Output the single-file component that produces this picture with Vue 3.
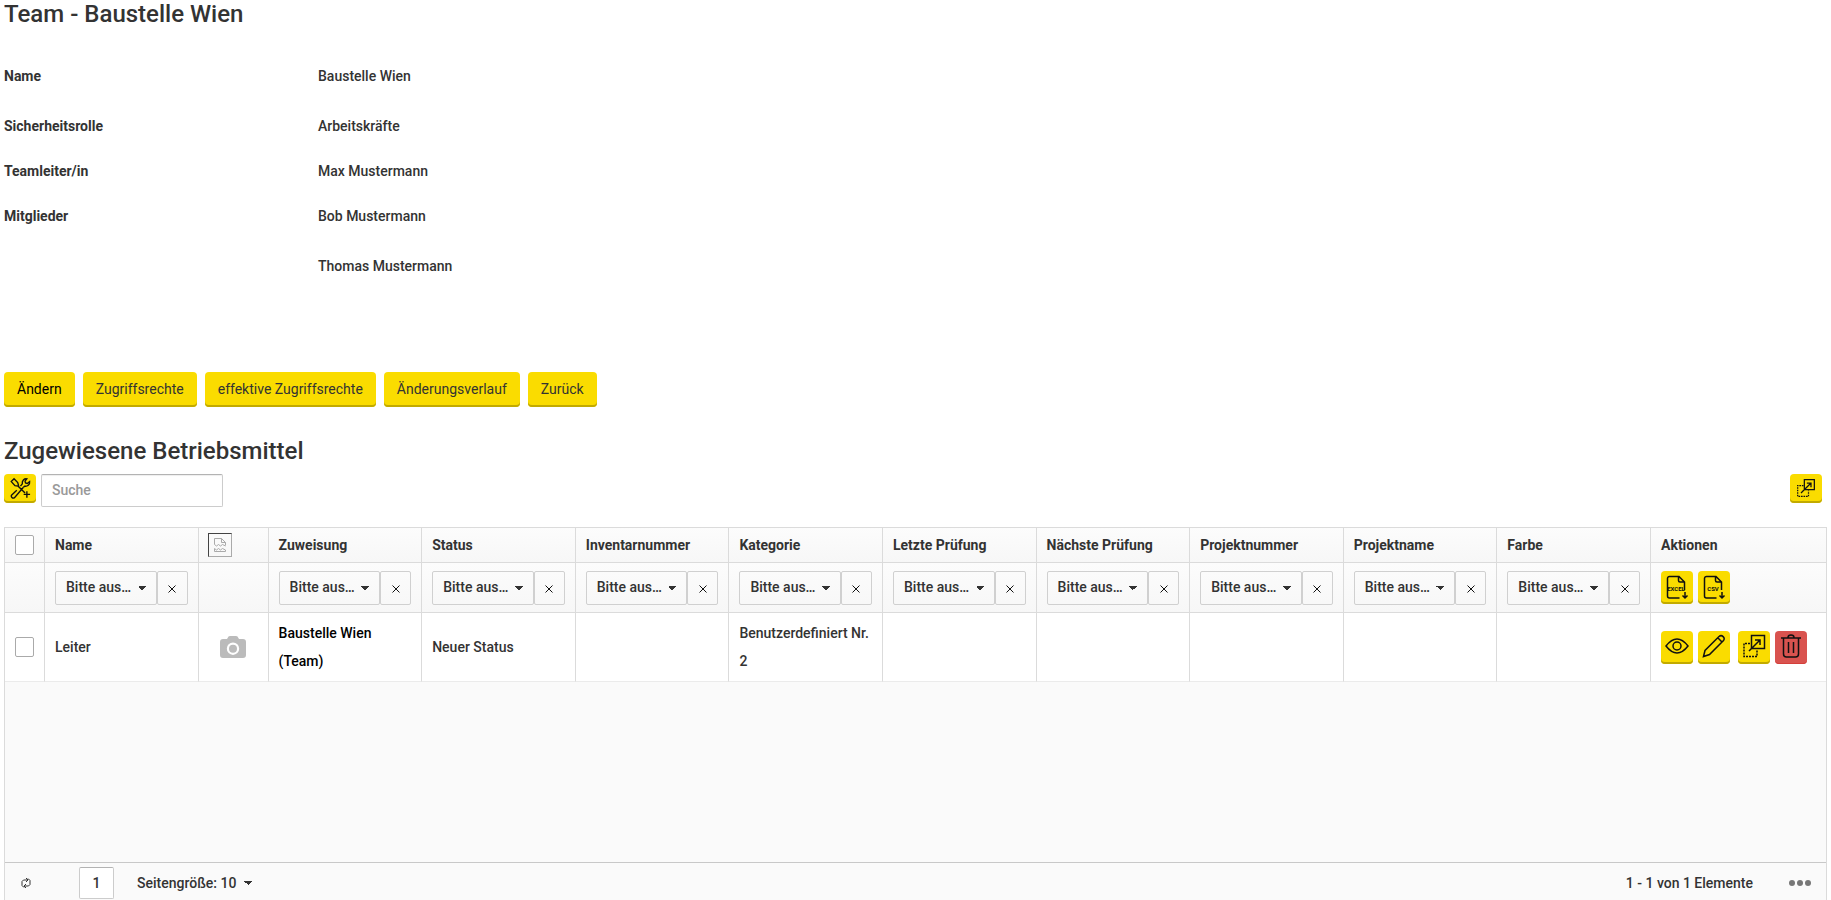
<template>
  <main class="team-page">
    <h2 class="page-title">Team - Baustelle Wien</h2>

    <dl class="details">
      <div v-for="field in fields" :key="field.label" class="detail-row">
        <dt>{{ field.label }}</dt>
        <dd v-for="value in field.values" :key="value">{{ value }}</dd>
      </div>
    </dl>

    <div class="page-actions">
      <button
        v-for="(action, index) in pageActions"
        :key="action"
        type="button"
        class="btn"
        :class="{ 'btn-primary': index === 0 }"
      >{{ action }}</button>
    </div>

    <h2 class="section-title">Zugewiesene Betriebsmittel</h2>

    <div class="toolbar">
      <button type="button" class="icon-btn" aria-label="Betriebsmittel zuweisen">
        <svg width="22" height="22" viewBox="0 0 24 24">
          <path d="M10.500 9.500 9.500 6 5.500 2 2.500 5 6.500 9.500 10 10 17.500 17.500M8.500 14.500 3 19.500c-1.500 2 1 4.500 3 3L15.500 11.500" />
          <path d="M12.500 10 14.500 7.500C14 4 16.500 1.500 19.500 2L17.500 4.500 18 6.500 20 7 22.500 5C23 8.500 20 10.500 17 10L15.500 11.500" />
          <path d="M19.500 15.500v7M16 19h7" />
        </svg>
      </button>
      <input v-model="search" class="search" type="text" placeholder="Suche" aria-label="Suche">
      <button type="button" class="icon-btn export-btn" aria-label="Zuweisung ändern">
        <svg width="20" height="20" viewBox="0 0 24 24">
          <path d="M10 2h12v12H10zM6 18 18 6M13 6h5v5" />
          <path class="dotted" d="M9 9H2v13h13v-7" />
        </svg>
      </button>
    </div>

    <section class="grid">
      <table>
        <colgroup>
          <col class="col-check">
          <col>
          <col class="col-image">
          <col v-for="column in columns.slice(1)" :key="column">
          <col class="col-actions">
        </colgroup>
        <thead>
          <tr class="head-row">
            <th><input v-model="allSelected" type="checkbox" aria-label="Alle auswählen"></th>
            <th>{{ columns[0] }}</th>
            <th class="image-head">
              <span class="broken-image">
                <svg width="14" height="16" viewBox="0 0 14 16">
                  <path d="M1.500 7.500V1.500h7l4 4v3M8.500 1.500v4h4M1.500 7.500l2 1.500 2-1.500 2 1.500 2-1.500 3 1.500M1.500 14.500v-3l2 1.500 2-1.500 2 1.500 2-1.500 3 1.500v1.500z" />
                </svg>
              </span>
            </th>
            <th v-for="column in columns.slice(1)" :key="column">{{ column }}</th>
            <th>Aktionen</th>
          </tr>
          <tr class="filter-row">
            <td></td>
            <template v-for="(column, index) in columns" :key="column">
              <td>
                <div class="filter">
                  <select v-model="filters[column]" :aria-label="column">
                    <option value="">Bitte aus…</option>
                  </select>
                  <button type="button" :aria-label="`${column} zurücksetzen`" @click="filters[column] = ''">
                    <svg width="8" height="8" viewBox="0 0 8 8"><path d="M.500 .500l7 7M7.500 .500l-7 7" /></svg>
                  </button>
                </div>
              </td>
              <td v-if="index === 0"></td>
            </template>
            <td>
              <div class="row-actions">
                <button v-for="type in ['EXCEL', 'CSV']" :key="type" type="button" class="icon-btn tall" :aria-label="type">
                  <svg width="24" height="26" viewBox="0 0 24 26">
                    <path d="M14.500 24H4.500a2 2 0 0 1-2-2V4.500a2 2 0 0 1 2-2h9.500l5.500 5.500v8M13.500 2.500v4a1.500 1.500 0 0 0 1.500 1.500h4.500" />
                    <path d="M20 18v6M17.500 21.500l2.500 2.500 2.500-2.500" />
                    <text x="11" y="17">{{ type }}</text>
                  </svg>
                </button>
              </div>
            </td>
          </tr>
        </thead>
        <tbody>
          <tr v-for="item in items" :key="item.name">
            <td><input v-model="item.selected" type="checkbox" :aria-label="item.name"></td>
            <td>{{ item.name }}</td>
            <td class="image-cell">
              <svg class="camera" width="26" height="24" viewBox="0 0 26 24">
                <path fill-rule="evenodd" d="M3 4h4l1.500-2.500Q9 1 10 1h6q1 0 1.500.5L19 4h4a3 3 0 0 1 3 3v13a3 3 0 0 1-3 3H3a3 3 0 0 1-3-3V7a3 3 0 0 1 3-3ZM13 7.500a6.200 6.200 0 1 0 0 12.400 6.200 6.200 0 0 0 0-12.400ZM13 9.700a4 4 0 1 1 0 8 4 4 0 0 1 0-8Z" />
              </svg>
            </td>
            <td class="assignment">{{ item.assignment }}</td>
            <td>{{ item.status }}</td>
            <td></td>
            <td>{{ item.category }}</td>
            <td v-for="n in 5" :key="n"></td>
            <td>
              <div class="row-actions">
                <button type="button" class="icon-btn tall" aria-label="Anzeigen">
                  <svg width="24" height="24" viewBox="0 0 24 24">
                    <path d="M1 12C4.500 7.500 8 5 12 5s7.500 2.500 11 7c-3.500 4.500-7 7-11 7s-7.500-2.500-11-7Z" />
                    <circle cx="12" cy="12" r="4" />
                  </svg>
                </button>
                <button type="button" class="icon-btn tall" aria-label="Bearbeiten">
                  <svg width="24" height="24" viewBox="0 0 24 24">
                    <path d="M1.500 22.500 3 16.500 17 2.500c3-2.500 6.500 1.500 4.500 4L7.500 20.500ZM16 4l4.500 4.500" />
                  </svg>
                </button>
                <button type="button" class="icon-btn tall assign" aria-label="Zuweisen">
                  <svg width="24" height="24" viewBox="0 0 24 24">
                    <path d="M9.500 1.500h13v13h-13zM7 17 18 6M13 6h5v5" />
                    <path class="dotted" d="M8 9.500H2v13h13v-7" />
                  </svg>
                </button>
                <button type="button" class="icon-btn tall danger" aria-label="Löschen">
                  <svg width="24" height="26" viewBox="0 0 24 26">
                    <path d="M2 5h20M9 4.500a3 2.500 0 0 1 6 0M4.500 5v16a3 3 0 0 0 3 3h9a3 3 0 0 0 3-3V5M9.500 9v11M14.500 9v11" />
                  </svg>
                </button>
              </div>
            </td>
          </tr>
        </tbody>
      </table>

      <footer class="pager">
        <button type="button" class="refresh" aria-label="Aktualisieren">
          <svg width="10" height="12" viewBox="0 0 10 12">
            <path d="M3.500 10H2.500L1 8.500v-4L2.500 3h4M5 1l2 2-2 2M6.500 2h1L9 3.500v4L7.500 9h-4M5 7 3 9l2 2" />
          </svg>
        </button>
        <input v-model="page" class="page-input" type="text" aria-label="Seite">
        <select v-model="pageSize" class="page-size" aria-label="Seitengröße">
          <option :value="10">Seitengröße: 10</option>
        </select>
        <span class="pager-info">1 - 1 von 1 Elemente</span>
        <button type="button" class="more" aria-label="Mehr">
          <i></i><i></i><i></i>
        </button>
      </footer>
    </section>
  </main>
</template>

<script setup>
import { ref, reactive, computed } from 'vue';

const fields = [
  { label: 'Name', values: ['Baustelle Wien'] },
  { label: 'Sicherheitsrolle', values: ['Arbeitskräfte'] },
  { label: 'Teamleiter/in', values: ['Max Mustermann'] },
  { label: 'Mitglieder', values: ['Bob Mustermann', 'Thomas Mustermann'] }
];

const pageActions = ['Ändern', 'Zugriffsrechte', 'effektive Zugriffsrechte', 'Änderungsverlauf', 'Zurück'];

const columns = [
  'Name',
  'Zuweisung',
  'Status',
  'Inventarnummer',
  'Kategorie',
  'Letzte Prüfung',
  'Nächste Prüfung',
  'Projektnummer',
  'Projektname',
  'Farbe'
];

const items = reactive([
  {
    name: 'Leiter',
    assignment: 'Baustelle Wien (Team)',
    status: 'Neuer Status',
    category: 'Benutzerdefiniert Nr. 2',
    selected: false
  }
]);

const search = ref('');
const page = ref('1');
const pageSize = ref(10);
const filters = reactive(Object.fromEntries(columns.map(column => [column, ''])));

const allSelected = computed({
  get: () => items.every(item => item.selected),
  set: (value) => items.forEach(item => { item.selected = value; })
});
</script>

<style>
body {
  margin: 0;
  background: #fff;
}
</style>

<style scoped>
* {
  box-sizing: border-box;
}

.team-page {
  display: flex;
  flex-direction: column;
  min-height: 100vh;
  padding: 0 4px;
  font-family: Roboto, "Liberation Sans", sans-serif;
  font-size: 14px;
  font-weight: 500;
  line-height: 20px;
  color: #333;
}

button,
input,
select {
  font: inherit;
  color: inherit;
}

button {
  cursor: pointer;
}

svg {
  display: block;
  fill: none;
  stroke: #111;
  stroke-width: 1.5;
}

.page-title,
.section-title {
  margin: 0;
  font-size: 24px;
  font-weight: 500;
  line-height: 28px;
}

.details {
  margin: 36px 0 0;
}

.detail-row {
  display: grid;
  grid-template-columns: 314px 1fr;
  padding-bottom: 25px;
}

.detail-row:first-child {
  padding: 2px 0 30px;
}

.detail-row:last-child {
  row-gap: 30px;
  padding-bottom: 96px;
}

dt {
  font-weight: 700;
}

dd {
  grid-column: 2;
  margin: 0;
}

.page-actions {
  display: flex;
  gap: 8px;
}

.btn {
  height: 35px;
  padding: 0 13px 2px;
  border: 0;
  border-radius: 4px;
  background: #fadc00;
  box-shadow: inset 0 -2px #c2aa00;
  font-weight: 400;
}

.btn-primary {
  color: #000;
}

.section-title {
  margin: 30px 0 9px;
}

.toolbar {
  display: flex;
  align-items: flex-start;
  gap: 5px;
  padding-right: 5px;
  margin-bottom: 20px;
}

.icon-btn {
  display: flex;
  align-items: center;
  justify-content: center;
  width: 32px;
  height: 29px;
  padding: 0 0 2px;
  border: 0;
  border-radius: 4px;
  background: #fadc00;
  box-shadow: inset 0 -2px #c2aa00;
}

.icon-btn.tall {
  height: 33px;
}

.icon-btn text {
  fill: #111;
  stroke: none;
  font-family: "Liberation Sans Narrow", Roboto, sans-serif;
  font-size: 6px;
  font-weight: 700;
  text-anchor: middle;
}

.dotted {
  stroke-dasharray: 2 1;
}

.search {
  width: 182px;
  height: 33px;
  padding: 0 10px 2px;
  border: 1px solid #ccc;
  border-top-color: #b3b3b3;
  border-radius: 2px;
  background: #fff;
  box-shadow: inset 0 1px 1px #eee;
}

.search::placeholder {
  color: #999;
}

.export-btn {
  margin-left: auto;
}

.grid {
  display: flex;
  flex: 1;
  flex-direction: column;
  border: 1px solid #dbdbdb;
  border-bottom: 0;
  background: #fafafa;
}

table {
  width: 100%;
  border-collapse: separate;
  border-spacing: 0;
  table-layout: fixed;
}

.col-check {
  width: 40px;
}

.col-image {
  width: 70px;
}

.col-actions {
  width: 175px;
}

th,
td {
  padding: 0 10px;
  border-right: 1px solid #dbdbdb;
  border-bottom: 1px solid #dbdbdb;
  text-align: left;
}

th:last-child,
td:last-child {
  border-right: 0;
}

.head-row th {
  height: 35px;
  background: linear-gradient(#fcfcfc, #f7f7f7);
  font-weight: 700;
}

.filter-row td {
  height: 50px;
  background: linear-gradient(#fcfcfc, #f7f7f7);
}

tbody td {
  height: 69px;
  background: #fff;
  line-height: 28px;
}

tbody tr:last-child td {
  border-bottom-color: #ebebeb;
}

input[type="checkbox"] {
  display: block;
  width: 19px;
  height: 20px;
  margin: 0;
  appearance: none;
  border: 1px solid #aaa;
  border-radius: 2px;
  background: #fff;
}

input[type="checkbox"]:checked {
  background: #fadc00;
}

.head-row .image-head {
  padding: 0 9px;
}

.broken-image {
  display: flex;
  align-items: center;
  justify-content: center;
  width: 24px;
  height: 24px;
  border: 1px solid #aaa;
  border-top-color: #444;
  border-left-color: #444;
}

.broken-image svg {
  stroke: #aaa;
  stroke-width: 1;
}

.image-cell {
  padding: 0;
}

.camera {
  margin: 0 auto;
  fill: #bbb;
  stroke: none;
}

.assignment {
  color: #000;
}

.filter {
  display: flex;
  height: 34px;
}

/* flat drop-downs with a small caret on the right */
.filter select,
.page-size {
  appearance: none;
  border-radius: 2px;
  background: conic-gradient(from -45deg at 50% 100%, #333 90deg, transparent 0) right 10px center / 8px 4px no-repeat;
}

.filter select,
.filter button {
  border: 1px solid #d0d0d0;
}

.filter select {
  flex: 1;
  min-width: 0;
  padding: 0 0 2px 10px;
}

.filter button {
  display: flex;
  align-items: center;
  justify-content: center;
  width: 31px;
  padding: 2px 0 0;
  border-radius: 2px;
  background: transparent;
}

.filter svg {
  stroke-width: 1;
}

.row-actions {
  display: flex;
  gap: 5px;
}

.assign {
  margin-left: 3px;
}

.icon-btn.danger {
  background: #d9534f;
  box-shadow: inset 0 -1px #d43f3a;
}

.pager {
  display: flex;
  align-items: center;
  height: 38px;
  margin-top: auto;
  padding: 2px 15px 0 16px;
  border-top: 1px solid #c8c8c8;
}

.refresh {
  padding: 0;
  border: 0;
  background: transparent;
}

.refresh svg {
  stroke: #333;
  stroke-width: 1;
}

.page-input {
  width: 35px;
  height: 32px;
  margin-left: 48px;
  padding: 0;
  border: 1px solid #ccc;
  border-top-color: #b3b3b3;
  border-radius: 2px;
  background: #fff;
  text-align: center;
}

.page-size {
  width: 115px;
  margin-left: 23px;
  padding: 0;
  border: 0;
  background-position: right 0 center;
}

.pager-info {
  margin-left: auto;
}

.more {
  display: flex;
  gap: 2px;
  margin-left: 36px;
  padding: 0;
  border: 0;
  background: transparent;
}

.more i {
  width: 6px;
  height: 6px;
  border-radius: 50%;
  background: #777;
}
</style>
